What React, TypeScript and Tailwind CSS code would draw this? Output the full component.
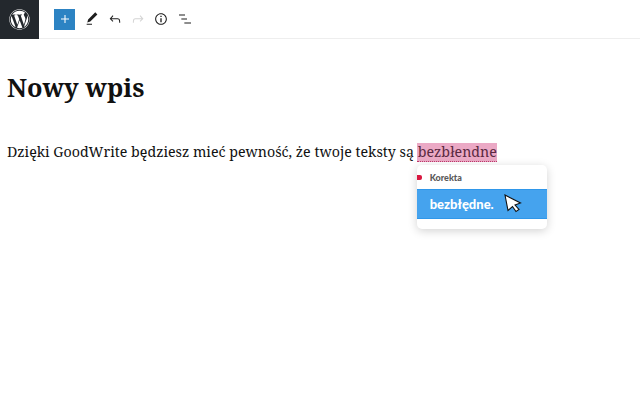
import { FaWordpress } from 'react-icons/fa';

const serif = "font-['Noto_Serif','DejaVu_Serif',serif]";

function Icon({ d, className }: { d: string; className?: string }) {
  return (
    <svg viewBox="0 0 24 24" className={`h-[16px] w-[16px] fill-current ${className ?? ''}`}>
      <path d={d} />
    </svg>
  );
}

function Toolbar() {
  return (
    <header className="flex h-[39px] items-center border-b border-[#eeeeee] bg-white">
      <div className="flex h-[39px] w-[39px] items-center justify-center bg-[#23282d] text-white">
        <FaWordpress className="h-[21px] w-[21px]" />
      </div>
      <div className="ml-[15px] flex h-[21px] w-[21px] items-center justify-center bg-[#2c83c3] text-white">
        <Icon d="M18 11.2h-5.2V6h-1.6v5.2H6v1.6h5.2V18h1.6v-5.2H18z" className="h-[14px] w-[14px]" />
      </div>
      <div className="ml-[9px] flex items-center gap-[7px] text-[#1e1e1e]">
        <Icon d="M20.1 5.1L16.9 2 6.2 12.7l-1.3 4.4 4.5-1.3L20.1 5.1zM4 20.8h8v-1.5H4v1.5z" />
        <Icon d="M18.3 11.7c-.6-.6-1.4-.9-2.3-.9H6.7l2.9-3.3-1.1-1-4.5 5L8.5 16l1-1-2.7-2.7H16c.5 0 .9.2 1.3.5 1 1 1 3.4 1 4.5v.3h1.5v-.2c0-1.5 0-4.3-1.5-5.7z" />
        <Icon d="M15.6 6.5l-1.1 1 2.9 3.3H8c-.9 0-1.7.3-2.3.9-1.4 1.5-1.4 4.2-1.4 5.6v.2h1.5v-.3c0-1.1 0-3.5 1-4.5.3-.3.7-.5 1.3-.5h9.2L14.5 15l1.1 1.1 4.6-4.6-4.6-5z" className="text-[#d4d4d4]" />
        <Icon d="M12 3.2c-4.8 0-8.8 3.9-8.8 8.8 0 4.8 3.9 8.8 8.8 8.8 4.8 0 8.8-3.9 8.8-8.8 0-4.8-4-8.8-8.8-8.8zm0 16c-4 0-7.2-3.3-7.2-7.2C4.8 8 8 4.8 12 4.8s7.2 3.3 7.2 7.2c0 4-3.2 7.2-7.2 7.2zM11 17h2v-6h-2v6zm0-8h2V7h-2v2z" />
        <Icon d="M3 5.2h9v1.6H3zM6.5 11.2H15v1.6H6.5zM11 17.2h10v1.6H11z" className="ml-px" />
      </div>
    </header>
  );
}

function Popup() {
  return (
    <div className="absolute left-0 top-[22px] h-[64px] w-[130px] rounded-[5px] bg-white shadow-[0_2px_10px_rgba(0,0,0,0.18)]">
      <div className="flex h-[24px] items-center">
        <span className="h-[5px] w-[5px] rounded-r-[2px] bg-[#d9173f]" />
        <span className="ml-[8px] font-['Lato',sans-serif] text-[9px] font-black leading-none text-[#5a5a5a]">Korekta</span>
      </div>
      <div className="flex h-[30px] items-center border-y border-[#2f97ea] bg-[#45a3ee] pl-[13px]">
        <span className="font-['Lato',sans-serif] text-[13px] font-black leading-none text-white">bezbłędne.</span>
      </div>
      <svg viewBox="0 0 18 19" className="absolute left-[87px] top-[29px] h-[19px] w-[18px]">
        <path d="M1 1 L16.5 9 L11 11 L15 15.5 L12 17.5 L8.5 12.5 L4 16.5 Z" fill="#fff" stroke="#111" strokeWidth="1.1" strokeLinejoin="miter" />
      </svg>
    </div>
  );
}

export default function App() {
  return (
    <div className={`h-[400px] w-[640px] overflow-hidden bg-white text-[#191e23] ${serif}`}>
      <Toolbar />
      <main className="px-[7px]">
        <h1 className="mt-[29px] text-[25.3px] font-bold leading-[38px] text-[#111]">Nowy wpis</h1>
        <p className="mt-[34px] whitespace-nowrap text-[14.23px] leading-[24px] text-[#111]">
          Dzięki GoodWrite będziesz mieć pewność, że twoje teksty są{' '}
          <span className="relative -ml-px inline-block border-b border-dotted border-[#c0396c] bg-[#eba9c5] pl-px leading-[18px] text-[#5b2a42]">
            bezbłendne
            <Popup />
          </span>
        </p>
      </main>
    </div>
  );
}
